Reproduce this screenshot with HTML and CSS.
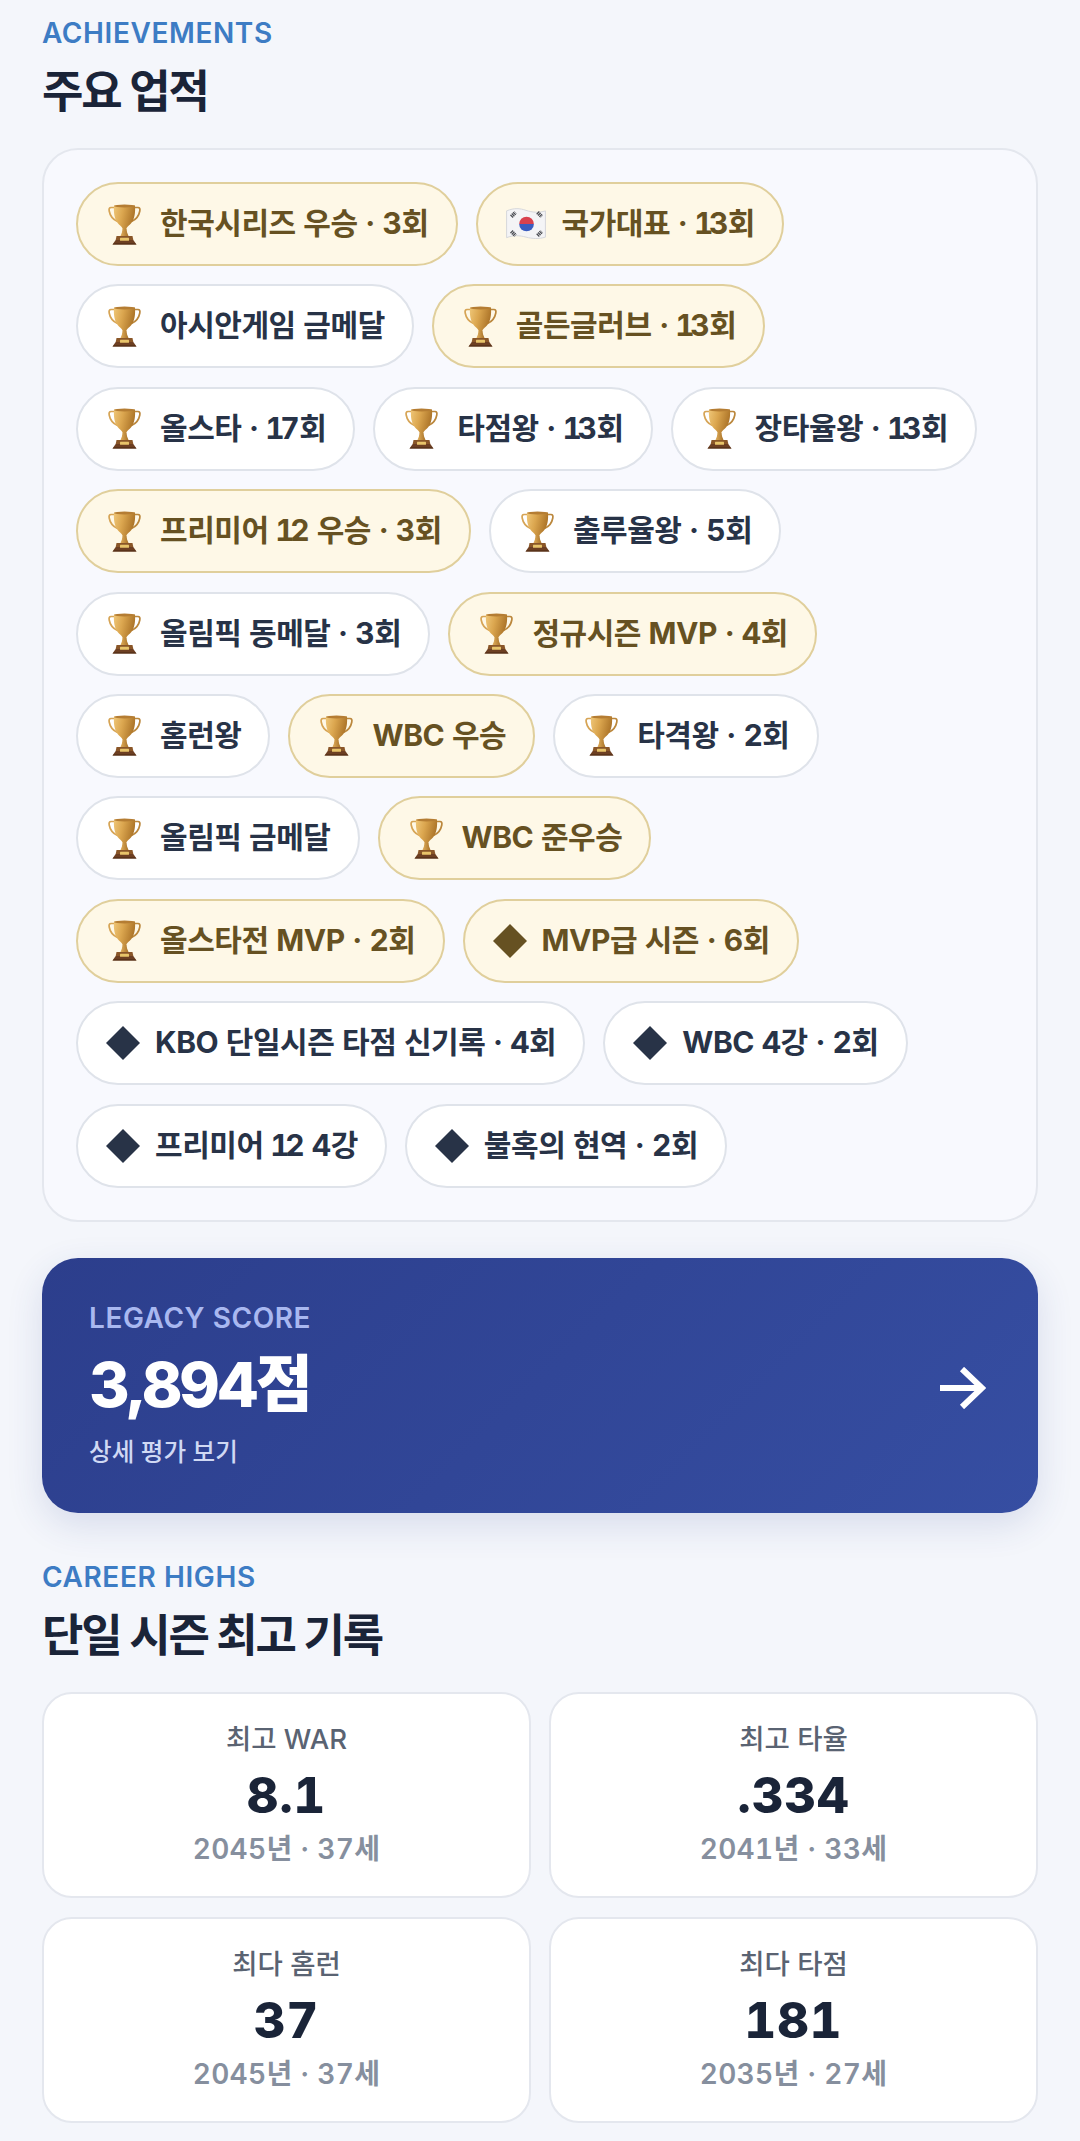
FILE: index.html
```html
<!DOCTYPE html>
<html lang="ko">
<head>
<meta charset="utf-8">
<title>주요 업적</title>
<link rel="stylesheet" href="styles.css">
</head>
<body>
<svg class="defs" width="0" height="0" aria-hidden="true">
  <defs>
    <linearGradient id="cup" x1="0" y1="0" x2="1" y2=".25">
      <stop offset="0" stop-color="#efc677"/>
      <stop offset=".45" stop-color="#dba64f"/>
      <stop offset="1" stop-color="#ad7529"/>
    </linearGradient>
    <linearGradient id="stem" x1="0" y1="0" x2="1" y2="0">
      <stop offset="0" stop-color="#e0ae5c"/>
      <stop offset="1" stop-color="#a87228"/>
    </linearGradient>
    <symbol id="trophy" viewBox="0 0 33 41">
      <path d="M7.500 3.500H3C1.400 3.500.8 4.800 1.200 7c.8 4.500 3.800 8.500 8.300 10.500" fill="none" stroke="#d6a455" stroke-width="1.700"/>
      <path d="M25.500 3.500H30c1.600 0 2.200 1.300 1.800 3.500-.8 4.500-3.800 8.500-8.300 10.500" fill="none" stroke="#bb873c" stroke-width="1.700"/>
      <path d="M6 1.500h21c.5 7.500-.4 13-3.300 17C21 22 18.500 22.800 18.300 25.500h-3.600C14.500 22.800 12 22 9.300 18.500 6.400 14.500 5.500 9 6 1.500z" fill="url(#cup)"/>
      <ellipse cx="16.500" cy="2" rx="10.500" ry="1.500" fill="#b57d33"/>
      <path d="M14.500 25h4l.6 3.500 1.400 3.500h-8l1.400-3.500z" fill="url(#stem)"/>
      <path d="M8.500 32h16l.8 4H7.700z" fill="#8a5628"/>
      <path d="M7.700 36h17.600l3.200 4.500H4.500z" fill="#6d3f22"/>
      <path d="M6 39.200h21l1.500 1.300H4.500z" fill="#553019"/>
      <rect x="12" y="33.800" width="9" height="3" rx=".5" fill="#e8c46a"/>
    </symbol>
    <symbol id="flag" viewBox="0 0 40 32">
      <path d="M1.500 3.500C9 .5 14 1 20 3c6 2 12 2.500 18.500 .5v25C32 30.500 26 30 20 28.500c-6-1.700-12-2-18.500 .5z" fill="#f4f4f6" stroke="#cfd2d8" stroke-width=".8"/>
      <path d="M13.500 16a7 7 0 0 1 14 0z" fill="#d9414e"/>
      <path d="M13.500 16a7 7 0 0 0 14 0z" fill="#3a5cc0"/>
      <g stroke="#4a4c52" stroke-width="3.600" stroke-dasharray="1.200 .6">
        <path d="M6 9l4-4"/>
        <path d="M31 5l4 4"/>
        <path d="M6 23l4 4"/>
        <path d="M31 27l4-4"/>
      </g>
    </symbol>
    <symbol id="diamond" viewBox="0 0 34 34">
      <path d="M17 0L34 17 17 34 0 17z" fill="currentColor"/>
    </symbol>
  </defs>
</svg>
<main class="page">
  <p class="eyebrow">ACHIEVEMENTS</p>
  <h2 class="title">주요 업적</h2>
  <section class="panel">
    <div class="chip gold"><svg class="ico"><use href="#trophy"/></svg><span>한국시리즈 우승 · 3회</span></div>
    <div class="chip gold"><svg class="ico ico-flag"><use href="#flag"/></svg><span>국가대표 · <span class="one">1</span>3회</span></div>
    <div class="chip"><svg class="ico"><use href="#trophy"/></svg><span>아시안게임 금메달</span></div>
    <div class="chip gold"><svg class="ico"><use href="#trophy"/></svg><span>골든글러브 · <span class="one">1</span>3회</span></div>
    <div class="chip"><svg class="ico"><use href="#trophy"/></svg><span>올스타 · <span class="one">1</span>7회</span></div>
    <div class="chip"><svg class="ico"><use href="#trophy"/></svg><span>타점왕 · <span class="one">1</span>3회</span></div>
    <div class="chip"><svg class="ico"><use href="#trophy"/></svg><span>장타율왕 · <span class="one">1</span>3회</span></div>
    <div class="chip gold"><svg class="ico"><use href="#trophy"/></svg><span>프리미어 <span class="one">1</span>2 우승 · 3회</span></div>
    <div class="chip"><svg class="ico"><use href="#trophy"/></svg><span>출루율왕 · 5회</span></div>
    <div class="chip"><svg class="ico"><use href="#trophy"/></svg><span>올림픽 동메달 · 3회</span></div>
    <div class="chip gold"><svg class="ico"><use href="#trophy"/></svg><span>정규시즌 MVP · 4회</span></div>
    <div class="chip"><svg class="ico"><use href="#trophy"/></svg><span>홈런왕</span></div>
    <div class="chip gold"><svg class="ico"><use href="#trophy"/></svg><span>WBC 우승</span></div>
    <div class="chip"><svg class="ico"><use href="#trophy"/></svg><span>타격왕 · 2회</span></div>
    <div class="chip"><svg class="ico"><use href="#trophy"/></svg><span>올림픽 금메달</span></div>
    <div class="chip gold"><svg class="ico"><use href="#trophy"/></svg><span>WBC 준우승</span></div>
    <div class="chip gold"><svg class="ico"><use href="#trophy"/></svg><span>올스타전 MVP · 2회</span></div>
    <div class="chip gold"><svg class="ico ico-dia"><use href="#diamond"/></svg><span>MVP급 시즌 · 6회</span></div>
    <div class="chip"><svg class="ico ico-dia"><use href="#diamond"/></svg><span>KBO 단일시즌 타점 신기록 · 4회</span></div>
    <div class="chip"><svg class="ico ico-dia"><use href="#diamond"/></svg><span>WBC 4강 · 2회</span></div>
    <div class="chip"><svg class="ico ico-dia"><use href="#diamond"/></svg><span>프리미어 <span class="one">1</span>2 4강</span></div>
    <div class="chip"><svg class="ico ico-dia"><use href="#diamond"/></svg><span>불혹의 현역 · 2회</span></div>
  </section>
  <a class="legacy">
    <div>
      <p class="legacy-label">LEGACY SCORE</p>
      <p class="legacy-score">3,894점</p>
      <p class="legacy-sub">상세 평가 보기</p>
    </div>
    <svg class="arrow" viewBox="0 0 46 42" fill="none" stroke="#fff" stroke-width="6"><path d="M0 21H42"/><path d="M22 2l20 19-20 19"/></svg>
  </a>
  <p class="eyebrow second">CAREER HIGHS</p>
  <h2 class="title">단일 시즌 최고 기록</h2>
  <section class="stats">
    <div class="stat"><p class="stat-label">최고 WAR</p><p class="stat-value">8.1</p><p class="stat-sub">2045년 · 37세</p></div>
    <div class="stat"><p class="stat-label">최고 타율</p><p class="stat-value">.334</p><p class="stat-sub">2041년 · 33세</p></div>
    <div class="stat"><p class="stat-label">최다 홈런</p><p class="stat-value">37</p><p class="stat-sub">2045년 · 37세</p></div>
    <div class="stat"><p class="stat-label">최다 타점</p><p class="stat-value">181</p><p class="stat-sub">2035년 · 27세</p></div>
  </section>
</main>
</body>
</html>
```
FILE: styles.css
```css
* { box-sizing: border-box; }
html, body { margin: 0; padding: 0; }
body {
  background: #f4f6fb;
  font-family: "Inter", "Noto Sans CJK KR", sans-serif;
  color: #1a2438;
  width: 1080px;
  height: 2141px;
  overflow: hidden;
}
p, h2 { margin: 0; }
.defs { position: absolute; }
.page { padding: 16px 42px 0; }
.eyebrow {
  font-size: 28px;
  line-height: 34px;
  font-weight: 600;
  color: #3d7cc4;
  letter-spacing: .6px;
}
.eyebrow.second { margin-top: 47px; }
.title {
  font-size: 45px;
  line-height: 60px;
  font-weight: 700;
  letter-spacing: -2.100px;
  color: #1a2438;
  margin-top: 12px;
  margin-bottom: 26px;
}
.panel {
  display: flex;
  flex-wrap: wrap;
  align-content: flex-start;
  gap: 18.400px 18px;
  padding: 32px;
  background: #f8f9fe;
  border: 2px solid #e4e7ee;
  border-radius: 36px;
}
.chip {
  display: inline-flex;
  align-items: center;
  height: 84px;
  padding: 0 27px 6px;
  background: #fff;
  border: 2px solid #dfe3ea;
  border-radius: 42px;
  font-size: 30px;
  font-weight: 700;
  letter-spacing: -.45px;
  font-variant-numeric: tabular-nums;
  color: #283347;
  white-space: nowrap;
}
.chip.gold {
  background: #fef8e7;
  border-color: #e0cf9c;
  color: #665122;
}
.one { margin: 0 -4px 0 -1px; }
.ico { width: 33px; height: 41px; margin: 6px 19px 0 3px; flex: none; }
.ico-flag { width: 42px; height: 34px; margin: 6px 15px 0 0; }
.ico-dia { width: 34px; height: 34px; margin: 6px 15px 0 1px; }
.legacy {
  display: flex;
  align-items: center;
  justify-content: space-between;
  margin-top: 36px;
  height: 255px;
  padding: 0 52px 0 47px;
  border-radius: 36px;
  background: linear-gradient(135deg, #2c3e8c, #364ea2);
  box-shadow: 0 12px 36px rgba(44, 62, 140, .14);
  color: #fff;
}
.legacy-label { font-size: 28px; line-height: 34px; font-weight: 600; color: #a9b8f0; letter-spacing: .55px; margin-top: -1px; }
.legacy-score { font-size: 62px; line-height: 78px; font-weight: 800; letter-spacing: -3.500px; margin-top: 11.500px; }
.legacy-sub { font-size: 24.600px; line-height: 34px; font-weight: 500; color: #d0d9f4; margin-top: 10.500px; }
.arrow { width: 46px; height: 42px; margin-top: 5px; }
.stats { display: grid; grid-template-columns: 1fr 1fr; gap: 19px 18px; margin-top: 1px; }
.stat {
  height: 206px;
  background: #fff;
  border: 2px solid #e4e7ee;
  border-radius: 30px;
  text-align: center;
  padding-top: 27px;
}
.stat-label { font-size: 27.500px; line-height: 36px; font-weight: 500; color: #5a6372; }
.stat-value { font-size: 49px; line-height: 62px; font-weight: 800; letter-spacing: 1px; color: #1a2438; margin-top: 8px; font-variant-numeric: tabular-nums; }
.stat-sub { font-size: 28px; line-height: 38px; font-weight: 600; letter-spacing: .3px; color: #868f9e; margin-top: 3px; font-variant-numeric: tabular-nums; }
```
